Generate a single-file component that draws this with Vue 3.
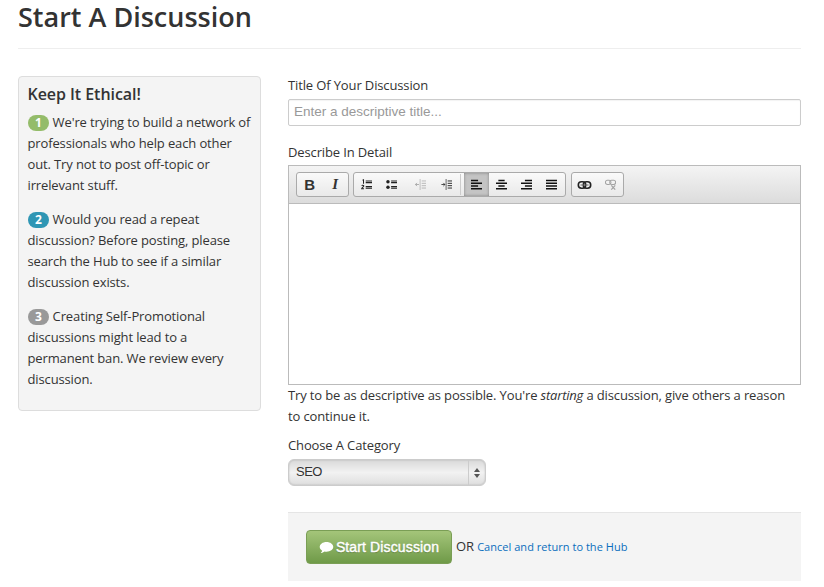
<script setup>
const tips = [
  { n: 1, cls: 'green', text: "We're trying to build a network of professionals who help each other out. Try not to post off-topic or irrelevant stuff." },
  { n: 2, cls: 'blue', text: 'Would you read a repeat discussion? Before posting, please search the Hub to see if a similar discussion exists.' },
  { n: 3, cls: 'grey', text: 'Creating Self-Promotional discussions might lead to a permanent ban. We review every discussion.' }
]
</script>

<template>
  <div class="page">
    <h1 class="title">Start A Discussion</h1>
    <div class="cols">
      <aside class="side">
        <h3>Keep It Ethical!</h3>
        <p v-for="t in tips" :key="t.n"><span class="badge" :class="t.cls">{{ t.n }}</span> {{ t.text }}</p>
      </aside>
      <form class="main" @submit.prevent>
        <label class="lab">Title Of Your Discussion</label>
        <input class="inp" placeholder="Enter a descriptive title..." />
        <label class="lab second">Describe In Detail</label>
        <div class="editor">
          <div class="toolbar">
            <div class="grp small">
              <button type="button" class="tb"><b class="gb">B</b></button>
              <button type="button" class="tb"><i class="gi">I</i></button>
            </div>
            <div class="grp mid">
              <button type="button" class="tb"><svg viewBox="0 0 14 14"><path d="M6 2.500h8M6 4.500h8M6 9.500h8M6 11.500h8" stroke="#222" stroke-width="1.500"/><path d="M2 1.500l1.200-.5v5M.8 8.500c.8-1 2.900-.8 2.700.5-.1.900-2.400 1.900-2.700 3.500h3" fill="none" stroke="#222" stroke-width="1.300"/></svg></button>
              <button type="button" class="tb"><svg viewBox="0 0 14 14"><circle cx="2.500" cy="3.500" r="2.200" fill="#222"/><circle cx="2.500" cy="10.500" r="2.200" fill="#222"/><path d="M6.500 2.500H14M6.500 4.500H14M6.500 9.500H14M6.500 11.500H14" stroke="#222" stroke-width="1.500"/></svg></button>
              <button type="button" class="tb out"><svg viewBox="0 0 14 14" opacity=".45"><path d="M6.500 0v14" stroke="#666"/><path d="M8.500 2.500H14M8.500 5.500H14M8.500 8.500H14M8.500 11.500H14" stroke="#555"/><path d="M5 7H.5M2.500 5L.5 7l2 2" fill="none" stroke="#333"/></svg></button>
              <button type="button" class="tb ind"><svg viewBox="0 0 14 14"><path d="M6.500 0v14" stroke="#444"/><path d="M8.500 2.500H14M8.500 5.500H14M8.500 8.500H14M8.500 11.500H14" stroke="#222" stroke-width="1.200"/><path d="M.5 7H5M3 5l2 2-2 2" fill="none" stroke="#222"/></svg></button>
              <span class="rule"></span>
              <button type="button" class="tb on"><svg viewBox="0 0 14 14"><path d="M0 2h9M0 5.500h14M0 9h9M0 12.500h14" stroke="#111" stroke-width="2"/></svg></button>
              <button type="button" class="tb"><svg viewBox="0 0 14 14"><path d="M3 2h8M0 5.500h14M3 9h8M0 12.500h14" stroke="#111" stroke-width="2"/></svg></button>
              <button type="button" class="tb"><svg viewBox="0 0 14 14"><path d="M5 2h9M0 5.500h14M5 9h9M0 12.500h14" stroke="#111" stroke-width="2"/></svg></button>
              <button type="button" class="tb"><svg viewBox="0 0 14 14"><path d="M0 2h14M0 5.500h14M0 9h14M0 12.500h14" stroke="#111" stroke-width="2"/></svg></button>
            </div>
            <div class="grp small">
              <button type="button" class="tb"><svg class="wide" viewBox="0 0 14 8"><rect x=".8" y=".8" width="7.400" height="6.400" rx="3.200" fill="none" stroke="#222" stroke-width="1.600"/><rect x="5.800" y=".8" width="7.400" height="6.400" rx="3.200" fill="none" stroke="#222" stroke-width="1.600"/><path d="M3 4h8" stroke="#666"/></svg></button>
              <button type="button" class="tb"><svg viewBox="0 0 14 14" opacity=".5"><rect x=".6" y="1.500" width="7" height="5.500" rx="2.500" fill="none" stroke="#555" stroke-width="1.300"/><rect x="6" y="1.500" width="7.500" height="5.500" rx="2.500" fill="none" stroke="#555" stroke-width="1.300"/><path d="M8 8l5 5.500M13 8l-5 5.500" stroke="#555" stroke-width="1.500"/></svg></button>
            </div>
          </div>
          <div class="area"></div>
        </div>
        <p class="help">Try to be as descriptive as possible. You're <em>starting</em> a discussion, give others a reason to continue it.</p>
        <label class="lab third">Choose A Category</label>
        <div class="select">
          <span class="sel-text">SEO</span>
          <span class="sel-arrows"><i class="up"></i><i class="down"></i></span>
        </div>
        <div class="actions">
          <button type="button" class="cta">
            <svg viewBox="0 0 16 14" width="15" height="13"><path d="M8 1C3.900 1 .7 3.300.7 6.300c0 1.700 1 3.100 2.600 4.100-.2 1-.8 1.900-1.500 2.600 1.500-.1 3-.8 4.100-1.700.7.100 1.400.2 2.100.2 4.100 0 7.300-2.300 7.300-5.200S12.100 1 8 1z" fill="#fff"/></svg>
            <span>Start Discussion</span>
          </button>
          <span class="or">OR</span>
          <a class="cancel" href="#" @click.prevent>Cancel and return to the Hub</a>
        </div>
      </form>
    </div>
  </div>
</template>

<style>
html, body { margin: 0; background: #fff; overflow: hidden; }
</style>

<style scoped>
.page { width: 783px; height: 587px; margin-left: 18px; overflow: hidden; font-family: "Open Sans", sans-serif; font-size: 13px; color: #333; }
.title { margin: 0; height: 48px; box-sizing: content-box; border-bottom: 1px solid #eee; font-size: 27px; font-weight: 600; line-height: 33px; color: #333; }
.cols { display: flex; gap: 27px; margin-top: 27px; align-items: flex-start; }
.side { width: 243px; height: 335px; box-sizing: border-box; flex: none; background: #f4f4f4; border: 1px solid #ddd; border-radius: 4px; padding: 7px 4px 0 8.500px; }
.side h3 { margin: 0 0 7px; font-size: 16px; font-weight: 600; line-height: 21px; color: #333; letter-spacing: -.05px; }
.side p { margin: 0 0 13px; line-height: 21px; letter-spacing: -.13px; }
.badge { display: inline-block; padding: 0 7.500px; height: 16px; line-height: 16px; border-radius: 8px; color: #fff; font-size: 12px; font-weight: 700; letter-spacing: 0; }
.green { background: #94bc6a; }
.blue { background: #2f96b4; }
.grey { background: #999; }
.main { flex: 1; min-width: 0; display: block; letter-spacing: -.13px; }
.lab { display: block; line-height: 18px; }
.inp { display: block; width: 100%; height: 27px; box-sizing: border-box; margin-top: 5px; padding: 0 5px 3px; border: 1px solid #ccc; border-radius: 2px; font: 13.500px "Liberation Sans", sans-serif; outline: none; box-shadow: inset 0 1px 1px rgba(0,0,0,.05); }
.inp::placeholder { color: #999; opacity: 1; }
.second { margin-top: 17px; }
.editor { margin-top: 4px; border: 1px solid #bbb; height: 220px; box-sizing: border-box; }
.toolbar { height: 38px; box-sizing: border-box; display: flex; gap: 5px; padding: 6px 0 0 7px; background: linear-gradient(#f4f4f4, #dcdcdc); border-bottom: 1px solid #bbb; }
.grp { display: flex; height: 25px; box-sizing: border-box; border: 1px solid #aaa; border-radius: 3px; background: linear-gradient(#fafafa, #e9e9e9); }
.small { width: 53px; }
.mid { margin-left: -1px; padding-right: 1px; }
.tb { width: 25px; height: 23px; padding: 0; border: 0; background: none; display: flex; align-items: center; justify-content: center; flex: 1 0 25px; }
.tb svg { width: 11px; height: 11px; }
.tb svg.wide { width: 15px; height: 8px; }
.out { margin-left: 4px; }
.ind { margin-left: 1px; }
.rule { width: 1px; height: 21px; margin: 1px 3px 0 1px; background: #ccc; flex: none; }
.on { background: #c4c4c4; box-shadow: inset 0 0 3px rgba(0,0,0,.35); }
.gb { font: 700 15px "Liberation Sans", sans-serif; color: #333; }
.gi { font: italic 700 15px "Liberation Serif", serif; color: #333; }
.area { height: 180px; background: #fff; }
.help { margin: 0; padding-right: 8px; line-height: 21px; }
.help em { letter-spacing: -.2px; }
.third { margin-top: 9px; }
.select { width: 198px; height: 27px; margin-top: 5px; box-sizing: border-box; border: 1px solid #ccc; border-radius: 6px; display: flex; background: linear-gradient(#d9d9d9, #f2f2f2 50%, #dedede); font: 13px "Liberation Sans", sans-serif; color: #333; letter-spacing: -.5px; box-shadow: inset 0 0 2px rgba(0,0,0,.2); }
.sel-text { flex: 1; padding-left: 7px; line-height: 24px; }
.sel-arrows { width: 16px; border-left: 1px solid #ccc; display: flex; flex-direction: column; align-items: center; justify-content: center; gap: 2px; }
.up { border: 3px solid transparent; border-top: 0; border-bottom: 4px solid #555; }
.down { border: 3px solid transparent; border-bottom: 0; border-top: 4px solid #555; }
.actions { margin-top: 26px; height: 69px; box-sizing: border-box; background: #f4f4f4; border-top: 1px solid #e5e5e5; padding: 17px 0 0 18px; display: flex; align-items: flex-start; letter-spacing: 0; }
.cta { height: 34px; width: 146px; box-sizing: border-box; padding: 0; border: 1px solid #7a9e55; border-radius: 4px; background: linear-gradient(#a4c57a, #6f9a48); color: #fff; font: 14px "Liberation Sans", sans-serif; letter-spacing: .13px; -webkit-text-stroke: .4px #fff; display: flex; align-items: center; justify-content: center; gap: 2px; text-shadow: 0 1px 1px rgba(0,0,0,.25); }
.or { margin-left: 4px; line-height: 32px; font-size: 13px; color: #333; }
.cancel { margin-left: 3px; line-height: 33px; font-size: 11px; color: #0a6ebd; text-decoration: none; letter-spacing: .03px; }
</style>
